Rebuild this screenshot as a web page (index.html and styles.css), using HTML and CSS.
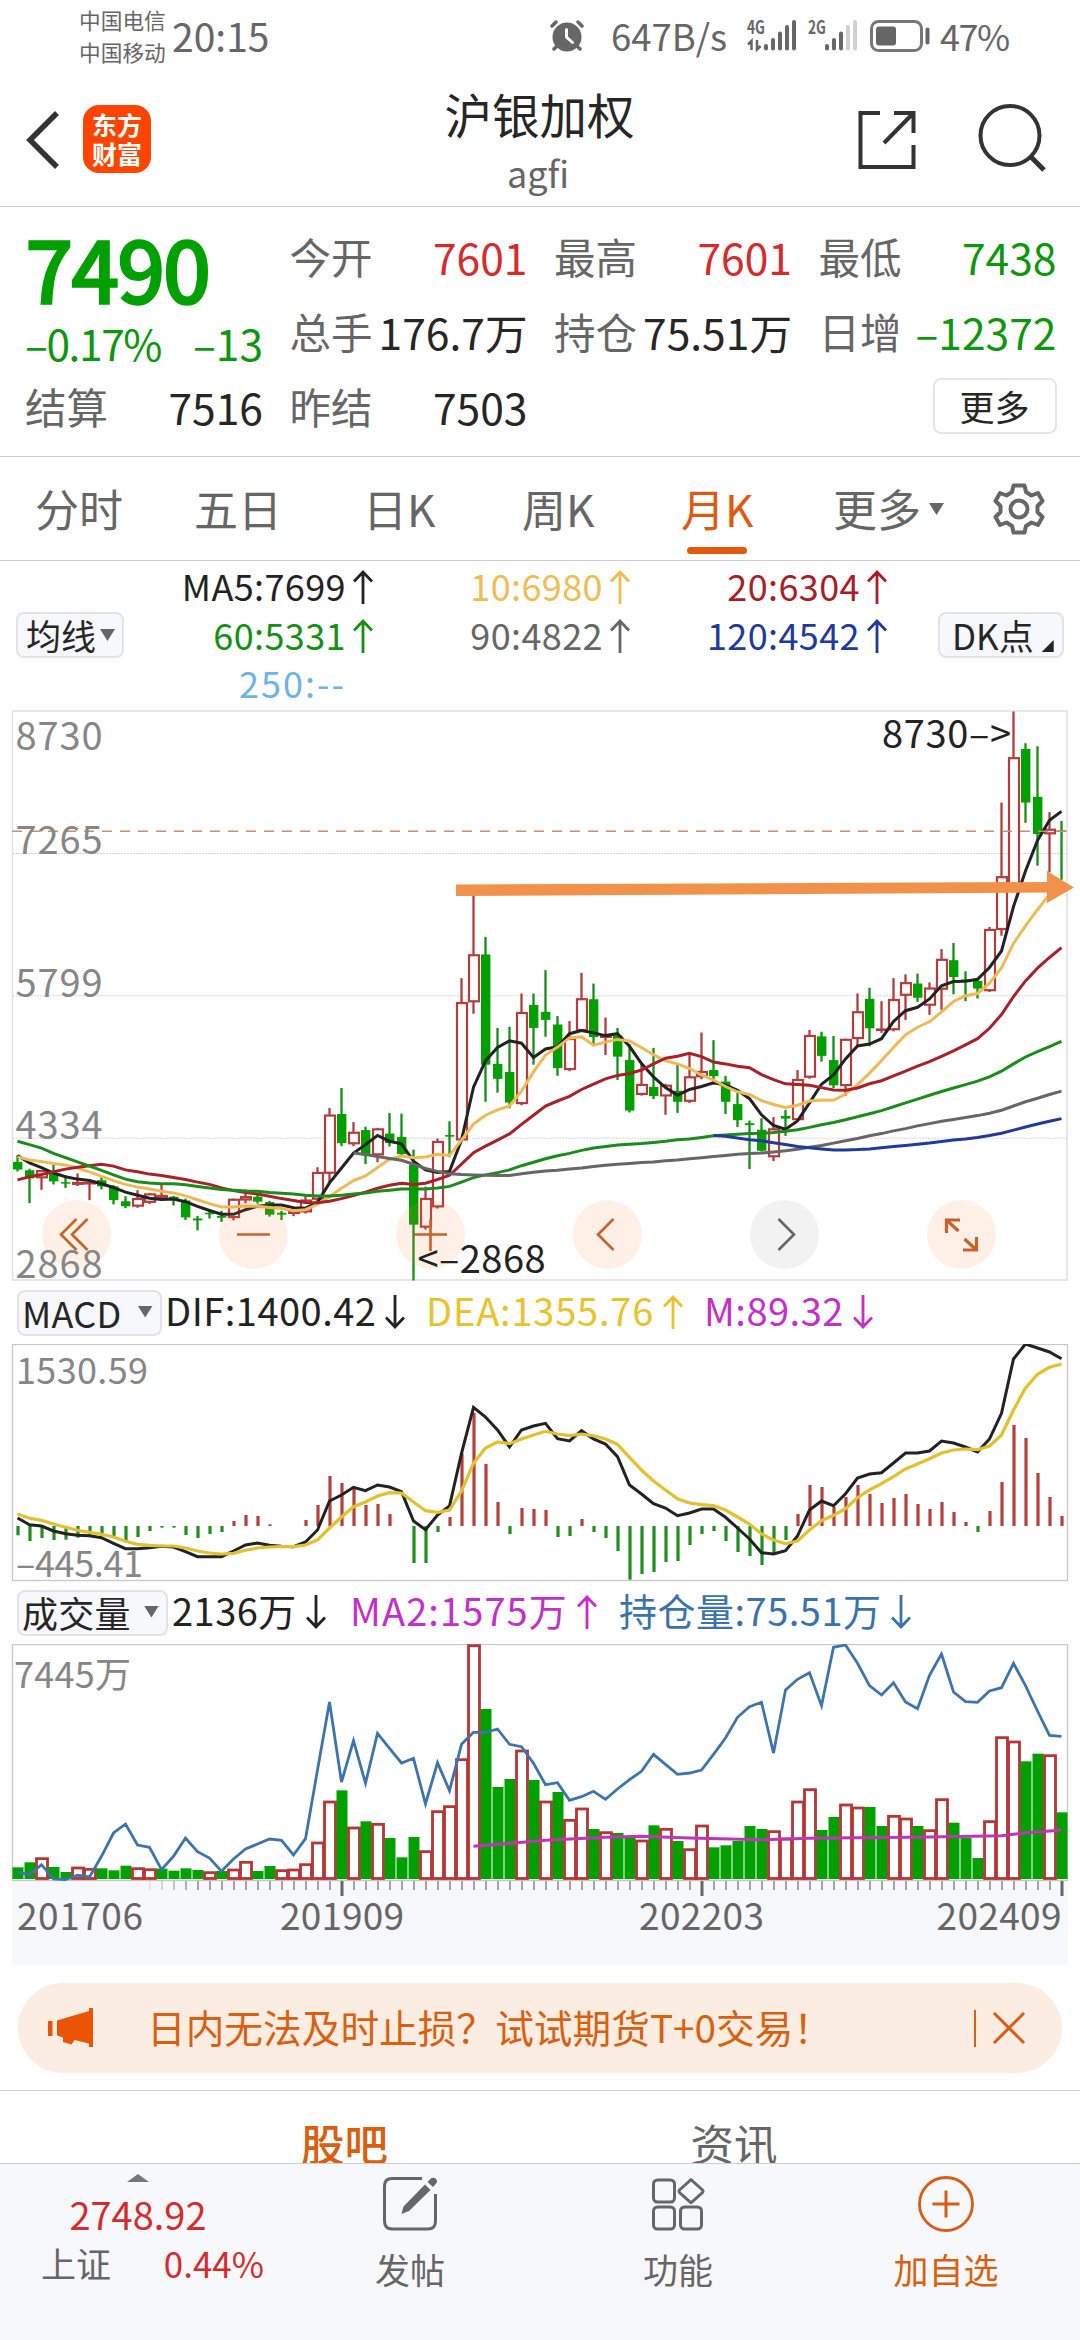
FILE: index.html
```html
<!DOCTYPE html>
<html lang="zh-CN">
<head>
<meta charset="utf-8">
<title>沪银加权 agfi</title>
<link rel="stylesheet" href="styles.css">
</head>
<body>
<svg class="defs" width="0" height="0">
  <symbol id="up" viewBox="0 0 20 34"><path d="M10 34V2M1 11.5 10 2l9 9.500" fill="none" stroke="currentColor" stroke-width="2.800"/></symbol>
  <symbol id="down" viewBox="0 0 20 34"><path d="M10 0V32M1 22.500 10 32l9-9.500" fill="none" stroke="currentColor" stroke-width="2.800"/></symbol>
</svg>

<header class="status">
  <div class="carriers"><span>中国电信</span><span>中国移动</span></div>
  <span class="clock">20:15</span>
  <svg class="alarm" viewBox="0 0 34 32" width="34" height="32">
    <circle cx="17" cy="17" r="14.500" fill="#666"/>
    <path d="M2 6 6 2M32 6 28 2M4 29l4-4M30 29l-4-4" stroke="#666" stroke-width="3.500" stroke-linecap="round"/>
    <path d="M16.500 9.500V17l6 5.500" fill="none" stroke="#fff" stroke-width="3" stroke-linecap="round"/>
  </svg>
  <span class="speed">647B/s</span>
  <svg class="signal" viewBox="0 0 112 36" width="112" height="36">
    <text x="0" y="15.500" textLength="18" lengthAdjust="spacingAndGlyphs">4G</text>
    <text x="61" y="15.500" textLength="18" lengthAdjust="spacingAndGlyphs">2G</text>
    <path d="M4.500 32V23L1 26.500M10 22V31.500L13.500 28" fill="none" stroke="#666" stroke-width="2.500"/>
    <path d="M19 30.500V28M26 30.500V22M33 30.500V15.500M40 30.500V9M47 30.500V4M80 30.500V28M87 30.500V22M94 30.500V15.500" stroke="#666" stroke-width="4" stroke-linecap="round"/>
    <path d="M101 30.500V9M108 30.500V4" stroke="#d0d0d0" stroke-width="4" stroke-linecap="round"/>
  </svg>
  <svg class="battery" viewBox="0 0 60 32" width="60" height="32">
    <rect x="1.500" y="1.500" width="50" height="29" rx="7" fill="none" stroke="#777" stroke-width="3"/>
    <rect x="6" y="6.500" width="20" height="19" rx="3" fill="#666"/>
    <path d="M57.500 9.500v13" stroke="#666" stroke-width="4" stroke-linecap="round"/>
  </svg>
  <span class="percent">47%</span>
</header>

<nav class="topbar">
  <svg class="back" viewBox="0 0 34 60" width="34" height="60"><path d="M31 3 4 30l27 27" fill="none" stroke="#333" stroke-width="5.500"/></svg>
  <div class="logo"><span>东方</span><span>财富</span></div>
  <div class="title"><h1>沪银加权</h1><p>agfi</p></div>
  <svg class="share" viewBox="0 0 60 60" width="60" height="60"><path d="M23 3H3.500V57H56.500V35M37 3H56.500V23M56 3.500 27 33" fill="none" stroke="#333" stroke-width="4"/></svg>
  <svg class="search" viewBox="0 0 70 70" width="70" height="70"><circle cx="33" cy="32.500" r="29.500" fill="none" stroke="#333" stroke-width="4"/><path d="M54 54 67 67" stroke="#333" stroke-width="5"/></svg>
</nav>

<section class="quote">
  <div class="last">
    <strong>7490</strong>
    <div class="pair green"><span class="rate">–0.17%</span><span>–13</span></div>
  </div>
  <div class="pair"><label>今开</label><b class="red">7601</b></div>
  <div class="pair"><label>最高</label><b class="red">7601</b></div>
  <div class="pair"><label>最低</label><b class="green">7438</b></div>
  <div class="pair"><label>总手</label><b>176.7万</b></div>
  <div class="pair"><label>持仓</label><b>75.51万</b></div>
  <div class="pair"><label>日增</label><b class="green">–12372</b></div>
  <div class="pair"><label>结算</label><b>7516</b></div>
  <div class="pair"><label>昨结</label><b>7503</b></div>
  <button class="more">更多</button>
</section>

<nav class="periods">
  <span>分时</span><span>五日</span><span>日K</span><span>周K</span><span class="on">月K</span><span class="has-menu">更多<i class="tri"></i></span>
  <svg viewBox="0 0 52 54" width="52" height="54"><path d="M20.500 3.500h11l1.500 6.500 5.500 3.500 6.500-2.500 4.500 8-5 5v6l5 5-4.500 8-6.500-2.500-5.500 3.500-1.500 6.500h-11l-1.500-6.500-5.500-3.500-6.500 2.500-4.500-8 5-5v-6l-5-5 4.500-8 6.500 2.500 5.500-3.500z" fill="none" stroke="#666" stroke-width="4" stroke-linejoin="round"/><circle cx="26" cy="27" r="8.500" fill="none" stroke="#666" stroke-width="4"/></svg>
</nav>

<section class="averages">
  <button class="chip ma-chip">均线<i class="tri"></i></button>
  <div class="ma-grid">
    <span class="c-black">MA5:7699<svg class="arrow"><use href="#up"/></svg></span>
    <span class="c-yellow">10:6980<svg class="arrow"><use href="#up"/></svg></span>
    <span class="c-crimson">20:6304<svg class="arrow"><use href="#up"/></svg></span>
    <span class="c-green">60:5331<svg class="arrow"><use href="#up"/></svg></span>
    <span class="c-gray">90:4822<svg class="arrow"><use href="#up"/></svg></span>
    <span class="c-navy">120:4542<svg class="arrow"><use href="#up"/></svg></span>
    <span class="c-sky empty">250:--<svg class="arrow"></svg></span>
  </div>
  <button class="chip dk-chip">DK点<i class="corner"></i></button>
</section>

<svg id="price" class="chart" viewBox="0 0 1080 573" width="1080" height="573"></svg>

<div class="legend">
  <button class="chip macd-chip">MACD<i class="tri"></i></button>
  <span class="c-black dif">DIF:1400.42<svg class="arrow"><use href="#down"/></svg></span>
  <span class="c-gold dea">DEA:1355.76<svg class="arrow"><use href="#up"/></svg></span>
  <span class="c-magenta">M:89.32<svg class="arrow"><use href="#down"/></svg></span>
</div>
<svg id="macd" class="chart" viewBox="0 0 1080 238" width="1080" height="238"></svg>

<div class="legend">
  <button class="chip vol-chip">成交量<i class="tri"></i></button>
  <span class="c-black vol">2136万<svg class="arrow"><use href="#down"/></svg></span>
  <span class="c-magenta ma2">MA2:1575万<svg class="arrow"><use href="#up"/></svg></span>
  <span class="c-blue oi">持仓量:75.51万<svg class="arrow"><use href="#down"/></svg></span>
</div>
<svg id="volume" class="chart" viewBox="0 0 1080 322" width="1080" height="322"></svg>

<section class="promo">
  <div class="banner">
    <svg viewBox="0 0 46 40" width="46" height="40"><path d="M0 13h4.500v15H0zM9 12.500 41 3V0h4v39h-4v-3.500L26.500 32l-3 4.500L15 34v-4.500L9 27.500z" fill="#ea5404"/></svg>
    <p>日内无法及时止损？试试期货T+0交易！</p>
    <i class="bar"></i>
    <svg class="close" viewBox="0 0 34 34" width="34" height="34"><path d="M2 2 32 32M32 2 2 32" stroke="#d95b16" stroke-width="3"/></svg>
  </div>
</section>

<nav class="feed"><span class="on">股吧</span><span>资讯</span></nav>

<footer class="dock">
  <div class="index">
    <i></i>
    <b>2748.92</b>
    <p><span>上证</span><em>0.44%</em></p>
  </div>
  <div class="act">
    <svg viewBox="0 0 56 56" width="56" height="56"><path d="M40 2.500H10Q2.500 2.500 2.500 10V45Q2.500 53 10 53H46Q53.500 53 53.500 45V18" fill="none" stroke="#666" stroke-width="3"/><path d="M43 8.500 48.500 14 27 35l-7.500 3 2-7.500zM45.500 6 49.500 2Q52 1 54 3t.5 4L51 11z" fill="#666"/></svg>
    <span>发帖</span>
  </div>
  <div class="act">
    <svg viewBox="0 0 54 56" width="54" height="56"><g fill="none" stroke="#666" stroke-width="3"><rect x="2.500" y="4" width="21" height="22" rx="4"/><rect x="2.500" y="31" width="21" height="22" rx="4"/><rect x="29.500" y="31" width="21" height="22" rx="4"/><path d="M39 4.500Q40 3 41 4.500L51.500 14Q52.500 15 51.500 16.500L41 26Q40 27.500 39 26L28.500 16.500Q27.500 15 28.500 14z"/></g></svg>
    <span>功能</span>
  </div>
  <div class="act add">
    <svg viewBox="0 0 56 56" width="56" height="56"><circle cx="28" cy="28" r="26.500" fill="none" stroke="#d95b16" stroke-width="2.800"/><path d="M14.500 28h27M28 14.500v27" stroke="#d95b16" stroke-width="3"/></svg>
    <span>加自选</span>
  </div>
</footer>
<script src="chart.js"></script>
</body>
</html>
```

FILE: styles.css
```css
* { box-sizing: border-box; margin: 0; padding: 0; }
body {
  width: 1080px; height: 2340px; overflow: hidden;
  background: #fff; color: #262626;
  font-family: "Noto Sans CJK SC", sans-serif;
  font-size: 43px;
}
b, em, i, h1 { font-weight: 400; font-style: normal; }
button { font: inherit; color: inherit; }
.defs { display: block; height: 0; }
.red { color: #d42c2c; }
.green { color: #0f960f; }
.c-black { color: #222; }
.c-yellow { color: #f0bc55; }
.c-crimson { color: #a81e28; }
.c-green { color: #158f15; }
.c-gray { color: #666; }
.c-navy { color: #20399c; }
.c-sky { color: #6cb4e4; }
.c-gold { color: #e8c32e; }
.c-magenta { color: #c32fc8; }
.c-blue { color: #3a72ad; }

.status { display: flex; height: 80px; padding-left: 79px; color: #666; white-space: nowrap; }
.carriers { display: flex; flex-direction: column; width: 93px; padding-top: 4px; font-size: 21.7px; line-height: 32px; }
.clock { width: 378px; font-size: 39px; line-height: 70px; }
.alarm { margin-top: 20px; }
.speed { width: 136px; margin-left: 27px; font-size: 36.5px; line-height: 71px; }
.signal { margin-top: 18px; }
.signal text { font: 700 18px "Noto Sans CJK SC", sans-serif; fill: #666; }
.battery { margin: 20px 0 0 11px; }
.percent { margin-left: 10px; font-size: 36px; line-height: 71px; letter-spacing: -1.5px; }

.topbar { display: flex; height: 127px; border-bottom: 1px solid #cfcfcf; }
.back { margin: 30px 0 0 26px; }
.logo {
  display: flex; flex-direction: column; align-items: center; justify-content: center;
  width: 68px; height: 68px; margin: 25px 0 0 23px; border-radius: 16px;
  background: #ff4400; color: #fff; font-weight: 700; font-size: 25px; line-height: 29px;
}
.title { width: 400px; margin-left: 188px; text-align: center; }
.title h1 { height: 68px; padding-left: 1px; font-size: 47.5px; line-height: 68px; }
.title p { margin-top: 2px; padding-right: 2px; font-size: 36px; line-height: 44px; color: #666; }
.share { margin: 30px 0 0 118px; }
.search { margin: 23px 0 0 60px; }

.quote {
  display: grid; grid-template-columns: repeat(4, 238px); grid-auto-rows: 75px; column-gap: 26.5px;
  height: 250px; padding: 12px 0 0 25px; border-bottom: 1px solid #cfcfcf;
}
.last { grid-row: span 2; }
.last strong { display: block; font-size: 85px; line-height: 96px; font-weight: 500; letter-spacing: -2.5px; color: #00a000; -webkit-text-stroke: 1.6px #00a000; }
.last .pair { line-height: 56px; font-size: 42.5px; }
.rate { letter-spacing: -1.4px; }
.pair { display: flex; justify-content: space-between; font-size: 42.6px; line-height: 75px; white-space: nowrap; }
.pair label { font-size: 41.5px; color: #666; }
.more {
  grid-column: 4; justify-self: end; width: 124px; height: 56px; margin-top: 9px;
  border: 2px solid #e6e6e6; border-radius: 8px; background: #fff; font-size: 35px; line-height: 48px;
}

.periods { display: flex; height: 104px; border-bottom: 1px solid #cfcfcf; font-size: 44px; line-height: 102px; color: #666; white-space: nowrap; }
.periods span { width: 159px; padding-left: 35px; }
.periods span:nth-child(3) { margin-left: 10px; }
.periods .on { display: flex; flex-direction: column; color: #e0590f; }
.periods .on::after { content: ""; width: 60px; height: 7px; margin: -12px 0 0 6px; border-radius: 4px; background: #e0590f; }
.periods .has-menu { display: flex; width: 195px; margin-left: -7px; }
.tri { flex: none; width: 15px; height: 12px; background: #666; clip-path: polygon(0 0, 100% 0, 50% 100%); }
.has-menu .tri { margin: 46px 0 0 8px; }
.periods svg { margin: 25px 0 0; }

.chip { display: flex; align-items: center; flex: none; height: 46px; border: 2px solid #e1e3e8; border-radius: 8px; background: #f7f8fb; font-size: 35px; line-height: 40px; white-space: nowrap; }
.averages { display: flex; align-items: center; height: 148px; padding-left: 16px; }
.ma-chip { width: 108px; padding-left: 8px; }
.ma-chip .tri { margin-left: 4px; }
.dk-chip { width: 126px; margin-left: 51px; padding-left: 12px; }
.corner { width: 12px; height: 12px; margin: 22px 0 0 8px; background: #222; clip-path: polygon(100% 0, 100% 100%, 0 100%); }
.ma-grid { display: grid; grid-template-columns: 249px 257px 257px; grid-auto-rows: 48.5px; height: 148px; font-size: 36px; line-height: 49px; letter-spacing: .4px; }
.ma-grid span, .legend span { display: flex; justify-content: flex-end; white-space: nowrap; }
.ma-grid .empty { letter-spacing: 2px; }
.arrow { flex: none; width: 20px; height: 34px; margin: 9px 0 0 7px; }

.chart { display: block; }
.chart text { font-family: "Noto Sans CJK SC", sans-serif; }

.legend { display: flex; height: 62px; padding: 0 0 0 17px; font-size: 38px; line-height: 55px; letter-spacing: .5px; }
.legend .chip { height: 46px; margin-top: 8px; padding: 0 0 3px 3px; font-size: 36px; letter-spacing: .3px; }
.legend span { justify-content: flex-start; }
.legend .arrow { margin: 13px 0 0 9px; }
.macd-chip { width: 145px; }
.macd-chip .tri { margin-left: 16px; }
.dif { width: 261px; margin-left: 3px; }
.dea { width: 278px; letter-spacing: .8px; }
.vol-chip { width: 151px; }
.vol-chip .tri { margin-left: 13px; }
.vol { width: 178px; margin-left: 4px; }
.ma2 { width: 269px; letter-spacing: 1.1px; }

.promo { height: 125px; padding: 17px 18px 0; border-bottom: 1px solid #cfcfcf; }
.banner { display: flex; align-items: center; height: 90px; padding-left: 30px; border-radius: 45px; background: #fcede3; color: #d9600f; }
.banner p { width: 824px; margin-left: 53px; padding-bottom: 5px; font-size: 38.7px; line-height: 84px; white-space: nowrap; }
.bar { width: 2px; height: 37px; margin-left: 3px; background: #d9600f; }
.close { margin-left: 16px; }

.feed { display: flex; height: 72px; padding-left: 301px; overflow: hidden; font-size: 43.5px; line-height: 103px; color: #666; }
.feed span { width: 391px; }
.feed .on { color: #d9600f; font-weight: 500; }

.dock { display: flex; height: 177px; border-top: 1px solid #cdcfd3; background: #f7f8fb; }
.index { width: 276px; text-align: center; color: #d42c2c; }
.index i { display: block; width: 22px; height: 8px; margin: 10px auto 0; background: #777; clip-path: polygon(50% 0, 100% 100%, 0 100%); }
.index b { display: block; margin-top: 9px; font-size: 38px; line-height: 46px; }
.index p { display: flex; justify-content: space-between; padding: 0 12px 0 41px; font-size: 35px; line-height: 52px; }
.index p span { color: #666; }
.act { display: flex; flex-direction: column; align-items: center; width: 268px; font-size: 35px; line-height: 50px; color: #666; }
.act svg { margin: 12px 0; }
.add { color: #d9600f; }
```

FILE: chart.js
```js
const STEP = 12, FIRST = 17.5, LAST_INDEX = 87;
const RED = '#b53c3c', GREEN = '#00a000';
const priceY = v => v / 2.6133 - 9;
const panelY = v => v / 3 - 64;
const barX = i => FIRST + STEP * i;

// kind, body top, body bottom, wick top, wick bottom
const candles = `
g1207,1227,1190,1232 g1229,1250,1225,1315 r1231,1250,1231,1280 g1238,1258,1215,1266 g1260,1263,1243,1275
r1262,1267,1237,1270 r1262,1265,1262,1307 g1255,1271,1245,1279 g1271,1307,1268,1318 g1310,1323,1297,1328
r1304,1324,1281,1327 r1292,1314,1288,1317 r1296,1301,1265,1305 g1298,1306,1296,1321 g1308,1352,1303,1359
g1355,1360,1348,1386 g1340,1344,1330,1355 g1348,1353,1335,1364 r1306,1354,1303,1360 r1299,1308,1279,1315
g1298,1311,1292,1316 g1312,1345,1309,1350 g1340,1345,1335,1359 r1337,1343,1335,1349 r1308,1339,1295,1342
r1236,1306,1221,1310 r1086,1238,1066,1260 g1082,1158,1014,1166 r1131,1161,1103,1166 g1124,1190,1115,1213
r1122,1190,1118,1208 g1133,1158,1079,1167 g1142,1187,1081,1190 g1215,1371,1175,1517 r1304,1379,1272,1384
r1155,1326,1146,1329 g1137,1141,1101,1195 r792,1151,727,1155 r667,790,510,820 g665,953,619,1050
g951,990,857,1026 g972,1052,854,1067 r818,1056,767,1059 g797,857,767,953 g815,836,706,880
g848,962,826,982 r886,967,839,970 r782,865,713,867 g782,881,741,903 r877,883,830,928
g877,932,857,993 g941,1073,899,1078 r1006,1032,950,1034 g1011,1035,909,1043 r1008,1036,1003,1084
g1021,1050,949,1079 r986,1050,927,1053 r972,986,869,991 g967,983,889,1005 g997,1050,982,1082
g1056,1098,1027,1116 g1106,1111,1099,1226 g1123,1178,1093,1180 r1122,1195,1090,1205 g1087,1094,1071,1139
r993,1098,967,1100 r878,987,862,990 g879,930,867,945 g941,1007,878,1014 r888,1009,885,1035
r816,886,767,903 g781,858,752,905 r861,864,787,870 r784,863,727,866 r740,773,717,836
g741,778,715,789 r754,799,738,823 r679,757,651,810 g680,724,635,769 g730,733,709,787
g734,754,728,780 r601,761,593,763 r463,601,268,616 r152,485,30,490 g128,268,113,321
g253,350,121,433 r339,351,293,450 g341,343,316,470`.trim().split(/\s+/).map(s => [s[0], ...s.slice(1).split(',').map(Number)]);

const ma5 = [1190,1210,1222,1236,1246,1252,1256,1264,1274,1286,1294,1302,1305,1304,1311,1323,1334,1344,1344,1332,1323,1320,1320,1327,1328,1313,1262,1223,1184,1162,1138,1153,1160,1205,1228,1235,1232,1150,1012,943,908,891,897,934,912,906,872,864,870,877,872,905,950,985,1013,1033,1018,1010,1000,1006,1020,1042,1084,1112,1122,1100,1053,1004,980,938,904,899,885,840,812,803,781,747,736,735,730,699,656,540,447,367,314,291];
const ma10 = [1194,1202,1206,1211,1215,1223,1233,1245,1256,1266,1273,1278,1284,1288,1296,1306,1316,1325,1325,1322,1323,1326,1329,1335,1332,1318,1298,1276,1256,1244,1222,1200,1192,1196,1194,1187,1190,1150,1108,1085,1071,1061,1022,972,928,907,883,880,902,894,887,891,908,927,943,951,963,980,993,1010,1024,1031,1047,1057,1065,1059,1048,1045,1046,1030,1005,975,942,908,875,855,841,815,788,773,767,740,700,636,590,548,508,478];
const ma20 = [1254,1246,1240,1233,1226,1221,1217,1213,1218,1228,1233,1239,1243,1248,1253,1260,1266,1275,1282,1287,1291,1297,1303,1308,1313,1314,1310,1303,1295,1286,1276,1268,1263,1266,1263,1253,1242,1213,1183,1166,1150,1134,1109,1085,1061,1048,1036,1018,1004,990,981,976,967,951,936,931,923,932,946,951,957,961,979,992,1003,1005,1007,1013,1019,1020,1014,1003,995,982,970,957,945,931,917,901,885,858,822,775,734,701,673,647];
const ma60 = [1153,1162,1171,1185,1196,1207,1218,1229,1241,1252,1259,1262,1264,1264,1267,1271,1275,1279,1281,1283,1284,1287,1289,1291,1294,1296,1296,1294,1291,1288,1284,1281,1278,1278,1278,1275,1271,1260,1248,1241,1235,1228,1217,1208,1199,1191,1185,1177,1171,1167,1163,1161,1159,1156,1153,1149,1147,1143,1139,1137,1135,1133,1132,1130,1127,1123,1117,1110,1104,1097,1089,1081,1073,1063,1053,1043,1033,1023,1014,1005,996,985,970,951,933,919,906,892];
const ma90 = [1184,1188,1193,1198,1203,1213,1224,1232,1238,1240,1241,1242,1243,1243,1238,1234,1231,1229,1226,1223,1219,1216,1213,1211,1209,1207,1204,1202,1199,1196,1193,1190,1187,1185,1184,1181,1178,1174,1169,1164,1158,1152,1146,1139,1133,1126,1120,1113,1107,1101,1096,1091,1086,1080,1072,1061,1050,1041,1031,1022];
const ma120 = [1138,1140,1145,1149,1152,1157,1162,1167,1170,1173,1176,1176,1175,1173,1170,1167,1164,1161,1158,1154,1150,1147,1143,1138,1132,1124,1116,1108,1101,1094];

const hist = [766,783,774,780,779,773,769,766,775,784,771,753,743,743,765,774,762,756,723,705,708,733,738,738,720,675,588,609,625,675,672,702,738,849,849,756,711,520,398,552,666,762,684,687,690,771,768,717,756,774,813,899,882,876,846,843,795,762,753,783,816,828,855,819,780,702,615,621,681,651,615,642,669,654,642,672,687,666,696,726,756,693,606,435,474,579,651,708];
const dif = [714,734,738,753,761,766,767,773,790,806,806,803,799,801,815,830,830,830,813,795,789,796,799,800,786,750,663,645,622,632,615,621,635,723,749,705,678,520,382,411,450,501,450,438,430,476,483,452,477,492,530,615,642,671,684,707,699,687,687,712,744,777,818,822,812,768,690,663,677,641,594,582,578,549,519,519,513,483,489,501,516,477,400,237,192,204,216,236];
const dea = [702,715,721,732,742,751,757,763,771,784,793,796,798,798,804,813,819,822,820,811,804,801,800,800,795,780,744,711,680,666,648,638,639,666,692,697,690,633,550,504,486,491,477,465,454,462,467,462,467,477,493,532,570,603,630,656,669,674,677,690,711,732,762,780,791,783,750,722,706,686,653,630,611,590,567,552,536,519,510,507,509,498,465,390,324,283,262,252];

const volume = 'g862 g847 r833 g861 g876 r861 r865 g865 g871 g857 r863 r866 g866 g872 g865 g870 r875 g873 r867 r844 g873 g858 r869 r867 r851 r786 r663 g631 r741 g724 r730 g774 g832 g771 r812 r692 r677 r536 r194 g387 g621 g597 r510 g600 r663 g636 r718 r684 g747 r755 g759 g774 r780 g736 r745 g783 r806 r735 g802 g796 g783 g738 g747 r752 r774 r663 r626 g750 g711 r672 r681 g681 g738 r706 r714 g738 r749 r656 g728 g774 g834 r722 r470 r483 g544 g521 r524 g697'.split(' ');
const interest = [876,884,854,897,899,886,891,829,759,732,795,802,869,829,774,815,834,874,837,807,792,777,781,825,776,570,366,606,482,610,460,505,549,535,672,548,632,493,457,457,447,493,500,550,614,608,661,650,634,658,627,599,574,523,553,583,579,570,523,474,412,380,367,519,330,298,278,377,202,195,250,317,345,308,366,386,286,222,336,365,367,333,323,250,317,393,466,469];
const volumeMa = [[38,799],[44,781],[49,772],[52,769],[56,774],[62,779],[66,775],[70,773],[76,771],[82,767],[84,759],[87,750]];

const rect = (x, y, w, h, fill, stroke, sw = 2) => `<rect x="${x}" y="${y}" width="${w}" height="${h}" fill="${fill}"${stroke ? ` stroke="${stroke}" stroke-width="${sw}"` : ''}/>`;
const seg = (x1, y1, x2, y2, color, w = 1, extra = '') => `<line x1="${x1}" y1="${y1}" x2="${x2}" y2="${y2}" stroke="${color}" stroke-width="${w}" ${extra}/>`;
const poly = (pts, color, w) => `<polyline points="${pts.map(p => p[0].toFixed(1) + ',' + p[1].toFixed(1)).join(' ')}" fill="none" stroke="${color}" stroke-width="${w}"/>`;
const series = (arr, y, color, start = 0, w = 3) => poly(arr.map((v, i) => [barX(i + start), y(v)]), color, w);
const label = (s, x, y, w, size, color = '#868686') => `<text x="${x}" y="${y}" textLength="${w}" font-size="${size}" fill="${color}">${s}</text>`;

function drawPrice() {
  let s = rect(12.5, 2, 1054.5, 569, 'none', '#e2e2e2', 1.6);
  for (const y of [144.5, 286.8, 429.2]) s += seg(13, y, 1067, y, '#d6d6d6', 1, 'stroke-dasharray="2 1"');
  candles.forEach(([k, top, bottom, high, low], i) => {
    const x = barX(i), c = k === 'r' ? RED : '#158f15';
    s += seg(x, priceY(high), x, priceY(low), c, 2.3);
    const y = priceY(top), h = priceY(bottom) - y;
    s += k === 'r' ? rect(x - 4.5, y, 10, Math.max(h - 1, .5), '#fff', RED, 2.2) : rect(x - 4.5, y, 9.4, Math.max(h, 1.5), GREEN);
  });
  s += series(ma5, priceY, '#222') + series(ma10, priceY, '#efb956') + series(ma20, priceY, '#a82029')
    + series(ma60, priceY, '#1b8c1b') + series(ma90, priceY, '#666', 28) + series(ma120, priceY, '#20399c', 58);
  s += seg(12, 122.3, 1066, 122.3, '#c4926f', 1.4, 'stroke-dasharray="10 8"');
  s += '<polygon points="456,175.500 1047,173 1047,162 1074,178.500 1047,194 1047,183.500 456,187" fill="#f2924a"/>';
  [76.7, 253.3, 430.5, 607.5, 784.5, 961.5].forEach((x, i) => {
    s += `<circle cx="${x}" cy="525.500" r="34.500" fill="${i === 4 ? 'rgba(60,60,60,.065)' : 'rgba(255,130,60,.12)'}"/>`;
  });
  s += '<g fill="none" stroke="#c9622a" stroke-width="2.600"><path d="M76.500 510 61 525.500 76.500 541M87.500 510 72 525.500 87.500 541M237 525.500h33M414 525.500h33M430.500 510v32M613.500 510 598 525.500 613.500 541"/><path d="M778.500 510 794 525.500 778.500 541" stroke="#666"/><path d="M960 511H946.500V524M947 511.500 958.500 522M963 541H976.500V528M976 540.500 964.500 530" stroke-width="3.200"/></g>';
  s += label('8730', 15.5, 41, 87, 38) + label('7265', 15.5, 145, 87, 38) + label('5799', 15.5, 288, 87, 38) + label('4334', 15.5, 430, 87, 38) + label('2868', 15.5, 569, 87, 38);
  s += label('8730–&gt;', 882, 38.500, 129, 38, '#222') + label('&lt;–2868', 417.5, 564, 128, 38, '#222');
  document.getElementById('price').innerHTML = s;
}

function drawMacd() {
  let s = `<rect x="12.500" y=".5" width="1055" height="236" fill="none" stroke="#c8c8c8" stroke-width="1.300"/>`;
  s += label('1530.59', 16, 40, 132, 36) + label('–445.41', 16, 233, 127, 36);
  hist.forEach((v, i) => {
    if (v !== 738) s += seg(barX(i) + .5, panelY(738), barX(i) + .5, panelY(v), v < 738 ? '#b5403c' : '#1f8f1f', 3.2);
  });
  s += series(dif, panelY, '#222') + series(dea, panelY, '#e3c02f', 0, 3.2);
  document.getElementById('macd').innerHTML = s;
}

function drawVolume() {
  let s = rect(12, 237, 1056, 84, '#f7f8fb');
  s += `<rect x="12.500" y=".5" width="1055" height="236" fill="#fff" stroke="#c8c8c8" stroke-width="1.300"/>`;
  volume.forEach((item, i) => {
    const y = panelY(+item.slice(1)), x = barX(i);
    s += item[0] === 'r' ? rect(x - 5, y + 1, 11, 233.5 - y, '#fff', '#b53634', 2.8) : rect(x - 5, y, 11, 235 - y, GREEN);
  });
  s += poly(interest.map((v, i) => [barX(i), panelY(v)]), '#3d74ab', 2.8);
  s += poly(volumeMa.map(([i, v]) => [barX(i), panelY(v)]), '#bf35b5', 3);
  for (let i = 11; i <= LAST_INDEX; i++) {
    const major = i % 30 === 27;
    s += seg(barX(i) + .5, 237, barX(i) + .5, major ? 252 : 246, major ? '#666' : '#999', major ? 3 : 1.8, `opacity="${Math.min(1, (i - 10) / 5)}"`);
  }
  s += label('7445万', 14, 44, 117, 36);
  s += label('201706', 17, 286, 126, 37, '#666') + label('201909', 280, 286, 124, 37, '#666') + label('202203', 639, 286, 125, 37, '#666') + label('202409', 936.5, 286, 125, 37, '#666');
  document.getElementById('volume').innerHTML = s;
}

drawPrice();
drawMacd();
drawVolume();
```
